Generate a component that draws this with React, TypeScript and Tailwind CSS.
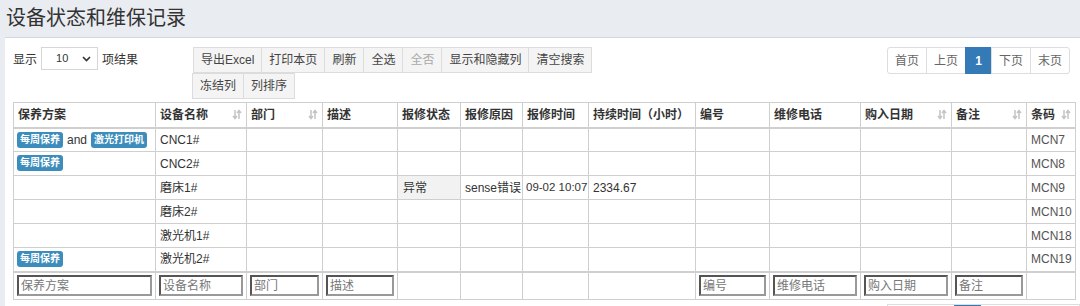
import React from "react";

const FONT = { fontFamily: '"Liberation Sans", "Noto Sans CJK SC", sans-serif' };

type Col = { title: string; width: number; sort?: boolean; filter?: boolean };

const columns: Col[] = [
  { title: "保养方案", width: 142, filter: true },
  { title: "设备名称", width: 91, sort: true, filter: true },
  { title: "部门", width: 76, sort: true, filter: true },
  { title: "描述", width: 75, filter: true },
  { title: "报修状态", width: 63 },
  { title: "报修原因", width: 62 },
  { title: "报修时间", width: 66 },
  { title: "持续时间（小时）", width: 107 },
  { title: "编号", width: 74, filter: true },
  { title: "维修电话", width: 91, filter: true },
  { title: "购入日期", width: 91, sort: true, filter: true },
  { title: "备注", width: 75, sort: true, filter: true },
  { title: "条码", width: 49, sort: true },
];

function SortIcon() {
  return (
    <svg width="10" height="11" viewBox="0 0 10 11" className="shrink-0">
      <path d="M3 1v8M1 7l2 2.5L5 7" stroke="#c4c4c4" strokeWidth="1.5" fill="none" />
      <path d="M7 10V2M5 4l2-2.5L9 4" stroke="#c4c4c4" strokeWidth="1.5" fill="none" />
    </svg>
  );
}

function Badge({ children }: { children: React.ReactNode }) {
  return (
    <span className="inline-block whitespace-nowrap rounded-[3px] bg-[#3c8dbc] px-[3px] text-[10px] font-bold leading-[16px] text-white">
      {children}
    </span>
  );
}

const rows: { plan?: React.ReactNode; planTop?: boolean; name: string; status?: string; reason?: string; time?: string; dur?: string; code: string }[] = [
  {
    plan: (
      <span className="flex items-center gap-[4px] whitespace-nowrap">
        <Badge>每周保养</Badge>
        <span className="text-[12px] text-[#333]">and</span>
        <Badge>激光打印机</Badge>
      </span>
    ),
    name: "CNC1#",
    code: "MCN7",
  },
  { plan: <Badge>每周保养</Badge>, planTop: true, name: "CNC2#", code: "MCN8" },
  { name: "磨床1#", status: "异常", reason: "sense错误", time: "09-02 10:07", dur: "2334.67", code: "MCN9" },
  { name: "磨床2#", code: "MCN10" },
  { name: "激光机1#", code: "MCN18" },
  { plan: <Badge>每周保养</Badge>, planTop: true, name: "激光机2#", code: "MCN19" },
];

const btn = "h-[26px] whitespace-nowrap border border-[#dcdcdc] bg-[#f4f4f4] px-[7px] text-[12px] leading-[24px] text-[#444] -ml-px first:ml-0";

export default function App() {
  return (
    <div className="h-[306px] w-[1080px] overflow-hidden bg-[#e9ecf1]" style={FONT}>
      {/* Title */}
      <div className="h-[37px] pl-[6px] pt-[4px] text-[20px] leading-[28px] text-[#333]">设备状态和维保记录</div>

      {/* Panel */}
      <div className="ml-[5px] h-full border-t border-[#d2d6de] bg-white pl-[8px] pt-[9px]">
        <div className="flex">
          {/* page length */}
          <div className="flex w-[180px] items-start text-[12px] text-[#333]">
            <span className="mt-[4px]">显示</span>
            <div className="mx-[4px] flex h-[23px] w-[57px] items-center justify-between border border-[#d6d6d6] bg-white pl-[14px] pr-[6px] text-[11px]">
              <span>10</span>
              <svg width="9" height="6" viewBox="0 0 9 6">
                <path d="M1 1l3.5 3.5L8 1" stroke="#333" strokeWidth="1.6" fill="none" />
              </svg>
            </div>
            <span className="mt-[4px]">项结果</span>
          </div>

          {/* buttons */}
          <div className="flex flex-col">
            <div className="flex">
              <button className={btn}>导出Excel</button>
              <button className={btn}>打印本页</button>
              <button className={btn}>刷新</button>
              <button className={btn}>全选</button>
              <button className={`${btn} !text-[#aaa]`}>全否</button>
              <button className={btn}>显示和隐藏列</button>
              <button className={btn}>清空搜索</button>
            </div>
            <div className="-ml-px flex">
              <button className={btn}>冻结列</button>
              <button className={btn}>列排序</button>
            </div>
          </div>

          {/* pagination */}
          <div className="ml-auto mr-[10px] flex h-[27px] self-start text-[12px]">
            {["首页", "上页"].map((t) => (
              <span key={t} className="-ml-px flex w-[40px] items-center justify-center border border-[#ddd] text-[#666] first:ml-0 first:rounded-l-[3px]">
                {t}
              </span>
            ))}
            <span className="-ml-px flex w-[27px] items-center justify-center border border-[#337ab7] bg-[#337ab7] font-bold text-white">1</span>
            {["下页", "末页"].map((t) => (
              <span key={t} className="-ml-px flex w-[40px] items-center justify-center border border-[#ddd] text-[#666] last:rounded-r-[3px]">
                {t}
              </span>
            ))}
          </div>
        </div>

        {/* table */}
        <table className="mt-[3px] table-fixed border-collapse text-[12px] text-[#333]" style={{ width: 1063 }}>
          <colgroup>
            {columns.map((c) => (
              <col key={c.title} style={{ width: c.width }} />
            ))}
          </colgroup>
          <thead>
            <tr className="h-[25px]">
              {columns.map((c) => (
                <th key={c.title} className="border border-b-2 border-[#cfcfcf] px-[4px] text-left font-bold">
                  <div className="flex items-center justify-between whitespace-nowrap">
                    <span>{c.title}</span>
                    {c.sort && <SortIcon />}
                  </div>
                </th>
              ))}
            </tr>
          </thead>
          <tbody>
            {rows.map((r) => (
              <tr key={r.code} className="h-[24px]">
                <td className={`border border-[#cfcfcf] px-[3px] py-0 ${r.planTop ? "align-top pt-px" : "align-middle"}`}>{r.plan}</td>
                <td className="border border-[#cfcfcf] px-[4px]">{r.name}</td>
                <td className="border border-[#cfcfcf]" />
                <td className="border border-[#cfcfcf]" />
                <td className={`border border-[#cfcfcf] px-[5px] ${r.status ? "bg-[#f2f2f2]" : ""}`}>{r.status}</td>
                <td className="border border-[#cfcfcf] px-[4px] whitespace-nowrap">{r.reason}</td>
                <td className="border border-[#cfcfcf] px-[3px] whitespace-nowrap text-[11.5px]">{r.time}</td>
                <td className="border border-[#cfcfcf] px-[4px]">{r.dur}</td>
                <td className="border border-[#cfcfcf]" />
                <td className="border border-[#cfcfcf]" />
                <td className="border border-[#cfcfcf]" />
                <td className="border border-[#cfcfcf]" />
                <td className="border border-[#cfcfcf] px-[4px] text-[#555]">{r.code}</td>
              </tr>
            ))}
            <tr className="h-[28px]">
              {columns.map((c) => (
                <td key={c.title} className="border border-t-2 border-[#cfcfcf] px-[3px]">
                  {c.filter && (
                    <input
                      placeholder={c.title}
                      className="block h-[21px] w-full border-2 border-t-[#555] border-l-[#555] border-r-[#999] border-b-[#999] px-[2px] text-[12px] placeholder:text-[#777]"
                      style={FONT}
                    />
                  )}
                </td>
              ))}
            </tr>
          </tbody>
        </table>

        {/* bottom pagination (cut off) */}
        <div className="ml-[874px] mt-[4px] flex h-[10px] border border-[#ddd] border-b-0">
          <span className="ml-[66px] w-[27px] bg-[#337ab7]" />
        </div>
      </div>
    </div>
  );
}
